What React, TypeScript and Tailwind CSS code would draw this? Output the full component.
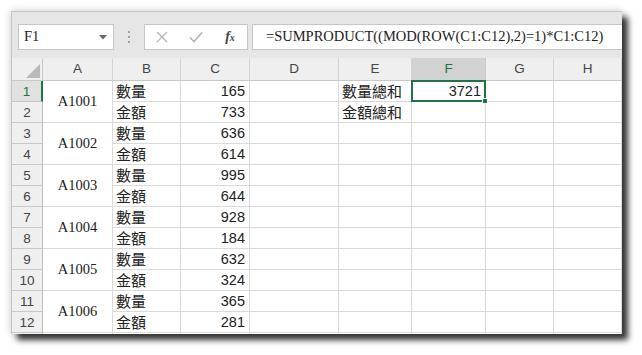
import React from 'react';

const serif = { fontFamily: '"Liberation Serif", "Noto Sans CJK TC", serif' };
const cjk = { fontFamily: '"Noto Sans CJK TC", "Liberation Sans", sans-serif' };
const sans = { fontFamily: '"Liberation Sans", "Noto Sans CJK TC", sans-serif' };

const columns = ['A', 'B', 'C', 'D', 'E', 'F', 'G', 'H'];

const items = [
  { id: 'A1001', qty: 165, amt: 733 },
  { id: 'A1002', qty: 636, amt: 614 },
  { id: 'A1003', qty: 995, amt: 644 },
  { id: 'A1004', qty: 928, amt: 184 },
  { id: 'A1005', qty: 632, amt: 324 },
  { id: 'A1006', qty: 365, amt: 281 },
];

const cell = 'border-r border-b border-[#dadada] bg-white';

function Toolbar() {
  return (
    <div className="flex items-start h-[46px] pt-[12px] pl-[6px] bg-[#e6e6e6]">
      {/* Name box */}
      <div className="flex items-center justify-between w-[96px] h-[26px] bg-white border border-[#c6c6c6] pl-[5px] pr-[6px]">
        <span className="text-[14.5px] text-[#222]" style={serif}>F1</span>
        <svg width="8" height="5" viewBox="0 0 8 5">
          <path d="M0 0 L8 0 L4 4.5 Z" fill="#6a6a6a" />
        </svg>
      </div>
      {/* Grip */}
      <div className="flex flex-col items-center justify-center gap-[3px] w-[30px] h-[26px]">
        <div className="w-[2px] h-[2px] bg-[#a0a0a0]" />
        <div className="w-[2px] h-[2px] bg-[#a0a0a0]" />
        <div className="w-[2px] h-[2px] bg-[#a0a0a0]" />
      </div>
      {/* Cancel / enter / fx */}
      <div className="flex items-center w-[104px] h-[26px] bg-white border border-[#c6c6c6]">
        <div className="w-[34px] flex justify-center">
          <svg width="12" height="12" viewBox="0 0 12 12">
            <path d="M1 1 L11 11 M11 1 L1 11" stroke="#b4b4b4" strokeWidth="1.3" />
          </svg>
        </div>
        <div className="w-[34px] flex justify-center">
          <svg width="14" height="12" viewBox="0 0 14 12">
            <path d="M1 6.5 L5 10.5 L13 1.5" stroke="#b4b4b4" strokeWidth="1.6" fill="none" />
          </svg>
        </div>
        <div className="w-[34px] flex justify-center">
          <span className="italic font-bold text-[14px] text-[#444] leading-none" style={serif}>
            f<span className="text-[10px]">x</span>
          </span>
        </div>
      </div>
      {/* Formula input */}
      <div className="flex items-center flex-1 h-[26px] ml-[4px] bg-white border border-[#c6c6c6] border-r-0 pl-[13px]">
        <span className="text-[14.5px] text-[#222] whitespace-nowrap" style={serif}>
          =SUMPRODUCT((MOD(ROW(C1:C12),2)=1)*C1:C12)
        </span>
      </div>
    </div>
  );
}

function RowHeader({ n }: { n: number }) {
  const active = n === 1;
  return (
    <div
      className={
        active
          ? 'flex items-center justify-center bg-[#e1e1e1] border-b border-[#c8c8c8] border-r-2 border-r-[#217346] text-[#217346] text-[13.5px] pt-[2px]'
          : 'flex items-center justify-center bg-[#efefef] border-b border-[#c8c8c8] border-r border-r-[#bdbdbd] text-[#444] text-[13.5px] pt-[2px]'
      }
      style={sans}
    >
      {n}
    </div>
  );
}

export default function App() {
  const rows: React.ReactNode[] = [];

  items.forEach((item, i) => {
    const r1 = i * 2 + 1;
    const r2 = r1 + 1;

    rows.push(<RowHeader key={`h${r1}`} n={r1} />);
    rows.push(
      <div key={`a${r1}`} className={`${cell} row-span-2 flex items-center justify-center text-[14.5px] text-[#222]`} style={serif}>
        {item.id}
      </div>
    );
    rows.push(
      <div key={`b${r1}`} className={`${cell} flex items-center pl-[3px] text-[15px] text-[#222]`} style={cjk}>
        數量
      </div>
    );
    rows.push(
      <div key={`c${r1}`} className={`${cell} flex items-center justify-end pr-[4px] pt-[1px] text-[14.5px] text-[#222]`} style={sans}>
        {item.qty}
      </div>
    );
    rows.push(<div key={`d${r1}`} className={cell} />);
    rows.push(
      <div key={`e${r1}`} className={`${cell} flex items-center pl-[3px] text-[15px] text-[#222] whitespace-nowrap`} style={cjk}>
        {r1 === 1 ? '數量總和' : ''}
      </div>
    );
    rows.push(
      <div key={`f${r1}`} className={`${cell} relative flex items-center justify-end pr-[4px] pt-[1px] text-[14.5px] text-[#222]`} style={sans}>
        {r1 === 1 ? '3721' : ''}
        {r1 === 1 && (
          <div className="absolute -left-[1px] -top-[1px] -right-[1px] -bottom-[1px] border-2 border-[#217346]">
            <div className="absolute -right-[4px] -bottom-[4px] w-[6px] h-[6px] bg-[#217346] border border-white" />
          </div>
        )}
      </div>
    );
    rows.push(<div key={`g${r1}`} className={cell} />);
    rows.push(<div key={`i${r1}`} className={cell} />);

    rows.push(<RowHeader key={`h${r2}`} n={r2} />);
    rows.push(
      <div key={`b${r2}`} className={`${cell} flex items-center pl-[3px] text-[15px] text-[#222]`} style={cjk}>
        金額
      </div>
    );
    rows.push(
      <div key={`c${r2}`} className={`${cell} flex items-center justify-end pr-[4px] pt-[1px] text-[14.5px] text-[#222]`} style={sans}>
        {item.amt}
      </div>
    );
    rows.push(<div key={`d${r2}`} className={cell} />);
    rows.push(
      <div key={`e${r2}`} className={`${cell} flex items-center pl-[3px] text-[15px] text-[#222] whitespace-nowrap`} style={cjk}>
        {r2 === 2 ? '金額總和' : ''}
      </div>
    );
    rows.push(<div key={`f${r2}`} className={cell} />);
    rows.push(<div key={`g${r2}`} className={cell} />);
    rows.push(<div key={`i${r2}`} className={cell} />);
  });

  return (
    <div className="w-[642px] h-[355px] bg-white pl-[11px] pt-[11px] overflow-hidden">
      <div className="w-[611px] h-[323px] bg-white border-t border-l border-[#c4c4c4] overflow-hidden shadow-[6px_6px_6px_rgba(0,0,0,0.78),0_0_8px_rgba(0,0,0,0.2)]">
        <Toolbar />
        <div className="grid grid-cols-[31px_70px_68px_69px_89px_73px_74px_68px_68px] grid-rows-[23px_repeat(13,21px)]">
          {/* Corner */}
          <div className="relative bg-[#efefef] border-r border-b border-[#c8c8c8]">
            <svg className="absolute right-[2px] bottom-[2px]" width="14" height="14" viewBox="0 0 14 14">
              <path d="M14 0 L14 14 L0 14 Z" fill="#b9b9b9" />
            </svg>
          </div>
          {columns.map((c) => (
            <div
              key={c}
              className={
                c === 'F'
                  ? 'flex items-center justify-center bg-[#d2d2d2] border-r border-[#c8c8c8] border-b border-b-[#ababab] text-[13.5px] text-[#217346]'
                  : 'flex items-center justify-center bg-[#efefef] border-r border-[#d4d4d4] border-b border-b-[#c8c8c8] text-[13.5px] text-[#444]'
              }
              style={sans}
            >
              {c}
            </div>
          ))}
          {rows}
          {/* Partial row 13 */}
          <div className="bg-[#efefef] border-r border-[#bdbdbd]" />
          <div className="border-r border-[#dadada]" />
          <div className="border-r border-[#dadada]" />
          <div className="border-r border-[#dadada]" />
          <div className="border-r border-[#dadada]" />
          <div className="border-r border-[#dadada]" />
          <div className="border-r border-[#dadada]" />
          <div className="border-r border-[#dadada]" />
          <div className="border-r border-[#dadada]" />
        </div>
      </div>
    </div>
  );
}
